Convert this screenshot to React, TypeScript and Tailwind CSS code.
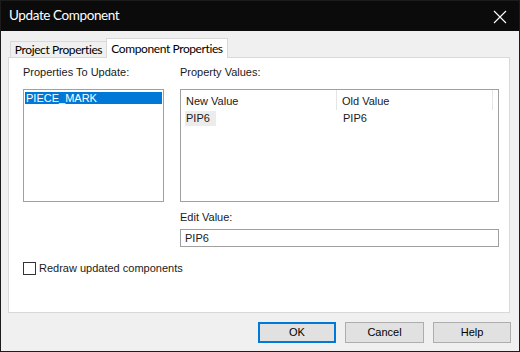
import React from "react";

const ui = { fontFamily: 'Lato, "Noto Sans", sans-serif' };
const ar = { fontFamily: '"Liberation Sans", Arial, sans-serif' };

export default function App() {
  return (
    <div className="w-[520px] h-[352px] flex flex-col border border-[#1c1c1c] bg-[#0b0b0b]">
      {/* Title bar */}
      <div className="h-[30px] flex items-center justify-between pl-[8px] pr-[12px] bg-[#0b0b0b]">
        <span className="text-[13.5px] tracking-[-0.4px] text-white leading-none whitespace-nowrap" style={ui}>
          Update Component
        </span>
        <svg width="14" height="14" viewBox="0 0 14 14" className="mt-[1px]">
          <path d="M1 1 L13 13 M13 1 L1 13" stroke="#ffffff" strokeWidth="1.1" />
        </svg>
      </div>
      {/* Body */}
      <div className="flex-1 bg-[#f0f0f0] flex flex-col">
        {/* Tabs */}
        <div className="flex items-end h-[26px] pl-[9px] pt-[7px]">
          <div
            className="h-[16px] w-[96px] border-t border-l border-[#d9d9d9] bg-[#f0f0f0] flex items-center justify-center text-[12px] tracking-[-0.4px] text-[#000] leading-none whitespace-nowrap"
            style={ui}
          >
            Project Properties
          </div>
          <div
            className="relative z-10 -mb-px h-[20px] w-[122px] border-t border-l border-r border-[#d9d9d9] bg-white flex items-start justify-center pt-[3px] text-[12px] tracking-[-0.4px] text-[#000] leading-[14px] whitespace-nowrap"
            style={ui}
          >
            Component Properties
          </div>
        </div>
        {/* Panel */}
        <div className="ml-[7px] w-[502px] h-[256px] border border-[#d9d9d9] bg-white flex flex-col pl-[14px] pt-[7px]">
          <div className="flex">
            {/* Left column */}
            <div className="w-[141px] flex flex-col">
              <div className="h-[14px] text-[11px] leading-[14px] text-[#1a1a1a] whitespace-nowrap" style={ar}>
                Properties To Update:
              </div>
              <div className="mt-[10px] h-[113px] border border-[#a0a0a0] bg-white p-px">
                <div className="h-[12px] bg-[#0078d7] text-white text-[11px] leading-[12px] pl-[1px] mt-[1px] overflow-visible whitespace-nowrap" style={ar}>
                  PIECE_MARK
                </div>
              </div>
            </div>
            {/* Right column */}
            <div className="ml-[16px] w-[319px] flex flex-col">
              <div className="h-[14px] text-[11px] leading-[14px] text-[#1a1a1a]" style={ar}>
                Property Values:
              </div>
              <div className="mt-[10px] h-[113px] border border-[#a0a0a0] bg-white flex flex-col">
                <div className="h-[20px] flex text-[11px] text-[#1a1a1a]" style={ar}>
                  <div className="w-[156px] border-r border-[#e5e5e5] pl-[5px] flex items-center pt-[2px]">
                    New Value
                  </div>
                  <div className="w-[156px] border-r border-[#e5e5e5] pl-[5px] flex items-center pt-[2px]">
                    Old Value
                  </div>
                </div>
                <div className="h-[15px] flex text-[11px] text-[#1a1a1a] leading-[15px] mt-[1px]" style={ar}>
                  <div className="w-[157px] pl-[4px]">
                    <span className="inline-block bg-[#ececec] pl-[1px] pr-[6px]">PIP6</span>
                  </div>
                  <div className="pl-[5px]">PIP6</div>
                </div>
              </div>
              <div className="mt-[8px] h-[14px] text-[11px] leading-[14px] text-[#1a1a1a]" style={ar}>
                Edit Value:
              </div>
              <div
                className="mt-[5px] h-[18px] border border-[#a0a0a0] bg-white flex items-center pl-[4px] text-[11px] text-[#1a1a1a]"
                style={ar}
              >
                PIP6
              </div>
            </div>
          </div>
          {/* Checkbox */}
          <div className="mt-[15px] flex items-center h-[13px]">
            <div className="w-[13px] h-[13px] border border-[#333333] bg-white" />
            <span className="ml-[3px] text-[11px] leading-[13px] text-[#1a1a1a] whitespace-nowrap" style={ar}>
              Redraw updated components
            </span>
          </div>
        </div>
        {/* Buttons */}
        <div className="flex justify-end gap-[9px] pr-[8px] mt-[9px]">
          <button
            className="w-[78px] h-[21px] border-2 border-[#0078d7] bg-[#e1e1e1] text-[11px] text-black flex items-center justify-center"
            style={ar}
          >
            OK
          </button>
          <button
            className="w-[79px] h-[21px] border border-[#adadad] bg-[#e1e1e1] text-[11px] text-black flex items-center justify-center"
            style={ar}
          >
            Cancel
          </button>
          <button
            className="w-[78px] h-[21px] border border-[#adadad] bg-[#e1e1e1] text-[11px] text-black flex items-center justify-center"
            style={ar}
          >
            Help
          </button>
        </div>
      </div>
    </div>
  );
}
